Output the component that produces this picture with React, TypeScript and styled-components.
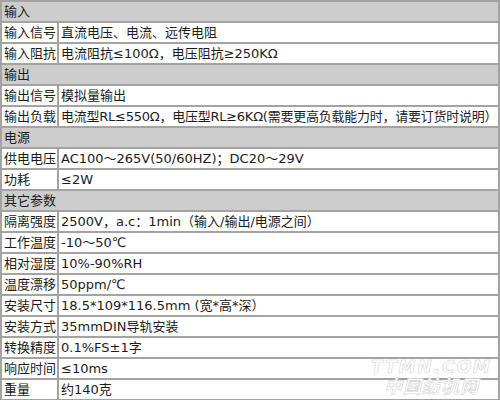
import { createGlobalStyle, styled } from "styled-components"

const GlobalStyle = createGlobalStyle`
  html, body {
    margin: 0;
    padding: 0;
    background: #ffffff;
  }
  body {
    font-family: "DejaVu Sans", "Noto Sans CJK SC", sans-serif;
  }
`

const Page = styled.div`
  position: relative;
  width: 500px;
  height: 400px;
  overflow: hidden;
`

const SpecTable = styled.table`
  width: 500px;
  border-collapse: collapse;
  table-layout: fixed;
  font-size: 13px;
  color: #1c1c1c;
`

const Cell = styled.td<{ $section?: boolean; $tight?: boolean }>`
  height: 19px;
  padding: 0 0 0 2px;
  border: 2px solid #a3a3a3;
  background: ${(p) => (p.$section ? "#cdcdcd" : "#ffffff")};
  white-space: nowrap;
  overflow: hidden;
  line-height: 19px;
  letter-spacing: ${(p) => (p.$tight ? "-0.25px" : "0")};
`

const Watermark = styled.div`
  position: absolute;
  right: 8px;
  bottom: 4px;
  display: flex;
  flex-direction: column;
  align-items: center;
  font-family: "DejaVu Sans", "Noto Sans CJK SC", sans-serif;
  font-style: italic;
  font-weight: bold;
  color: #ffffff;
  -webkit-text-stroke: 0.6px #d2d2d2;
  line-height: 1;
  pointer-events: none;
`

const MarkTop = styled.span`
  font-size: 17px;
  letter-spacing: 2px;
`

const MarkBottom = styled.span`
  font-size: 18px;
  letter-spacing: 1px;
  margin-top: 2px;
`

type Row = { section: string } | { label: string; value: string; tight?: boolean }

const rows: Row[] = [
  { section: "输入" },
  { label: "输入信号", value: "直流电压、电流、远传电阻" },
  { label: "输入阻抗", value: "电流阻抗≤100Ω，电压阻抗≥250KΩ" },
  { section: "输出" },
  { label: "输出信号", value: "模拟量输出" },
  { label: "输出负载", value: "电流型RL≤550Ω，电压型RL≥6KΩ(需要更高负载能力时，请要订货时说明）", tight: true },
  { section: "电源" },
  { label: "供电电压", value: "AC100～265V(50/60HZ)；DC20～29V" },
  { label: "功耗", value: "≤2W" },
  { section: "其它参数" },
  { label: "隔离强度", value: "2500V，a.c：1min（输入/输出/电源之间）" },
  { label: "工作温度", value: "-10～50℃" },
  { label: "相对湿度", value: "10%-90%RH" },
  { label: "温度漂移", value: "50ppm/℃" },
  { label: "安装尺寸", value: "18.5*109*116.5mm (宽*高*深）" },
  { label: "安装方式", value: "35mmDIN导轨安装" },
  { label: "转换精度", value: "0.1%FS±1字" },
  { label: "响应时间", value: "≤10ms" },
  { label: "重量", value: "约140克" },
]

export default function App() {
  return (
    <Page>
      <GlobalStyle />
      <SpecTable>
        <colgroup>
          <col style={{ width: 57 }} />
          <col />
        </colgroup>
        <tbody>
          {rows.map((row, i) =>
            "section" in row ? (
              <tr key={i}>
                <Cell $section colSpan={2}>{row.section}</Cell>
              </tr>
            ) : (
              <tr key={i}>
                <Cell>{row.label}</Cell>
                <Cell $tight={row.tight}>{row.value}</Cell>
              </tr>
            )
          )}
        </tbody>
      </SpecTable>
      <Watermark>
        <MarkTop>TTMN.COM</MarkTop>
        <MarkBottom>中国纺机网</MarkBottom>
      </Watermark>
    </Page>
  )
}
